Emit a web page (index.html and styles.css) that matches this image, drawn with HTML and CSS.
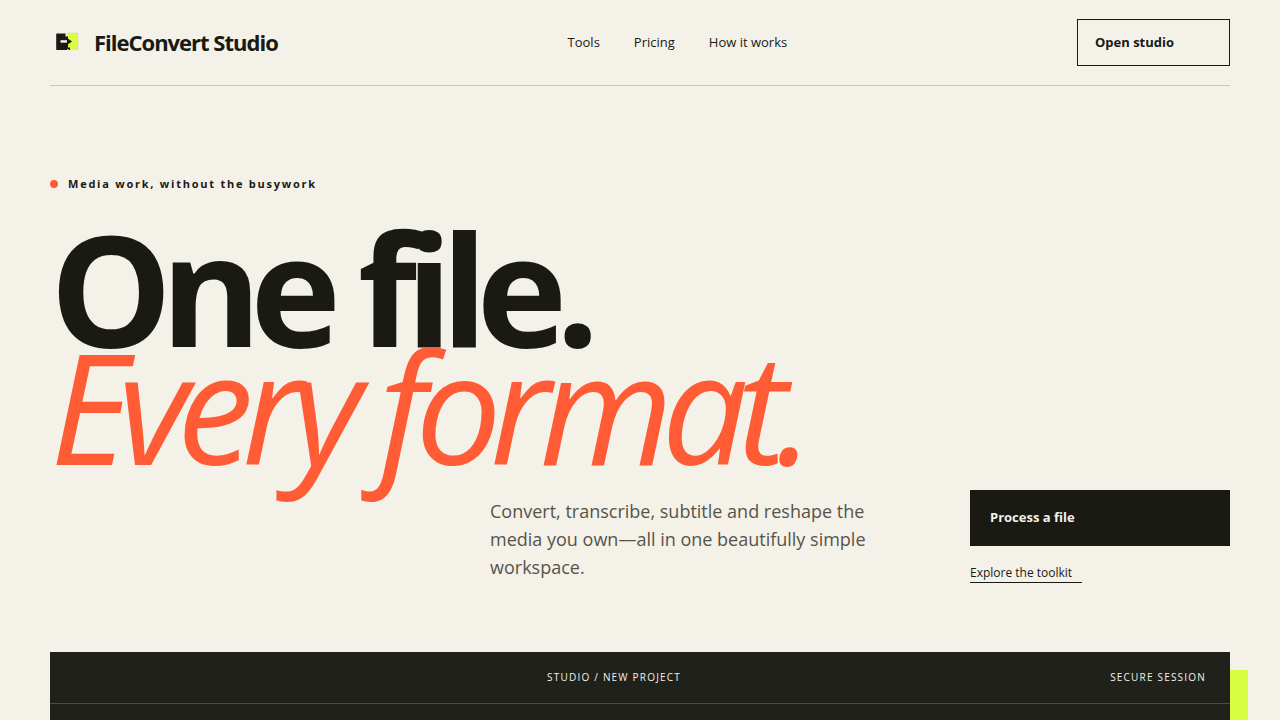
FILE: index.html
```
<!DOCTYPE html>
<html lang="en">
<head>
  <meta charset="UTF-8" />
  <meta name="viewport" content="width=device-width, initial-scale=1.0"/>
  <title>FileConvert Studio</title>
  <link rel="stylesheet" href="styles.css">
</head>
<body>
  <header class="site-header">
    <a class="brand" href="#">
      <svg class="brand-mark" viewBox="0 0 34 34" aria-hidden="true">
        <path d="M17 8h11v17H17z" fill="#d7ff3f"/>
        <path d="M17 8.300h10.700V25" fill="none" stroke="#ffc4a8" stroke-width="0.700"/>
        <path d="M7 8.500h8.500v3H18V24h-1v1H7q-.8 0-.8-.8V9.300q0-.8.8-.8z" fill="#191a14"/>
        <path d="M10.500 15.200H17v2.500h-6.500z" fill="#f4f1e8"/>
        <path d="M17 13l5 3.500-5 3.500z" fill="#191a14"/>
        <path d="M17 22.500h3V25h-1.500v-1H17z" fill="#191a14"/>
      </svg>
      <span>FileConvert Studio</span>
    </a>
    <nav class="site-nav">
      <a href="#tools">Tools</a>
      <a href="#pricing">Pricing</a>
      <a href="#how">How it works</a>
    </nav>
    <button class="open-btn" type="button">Open studio</button>
  </header>

  <main>
    <section class="hero">
      <p class="eyebrow"><span class="dot"></span>Media work, without the busywork</p>
      <h1>One file.<br><em>Every format.</em></h1>
      <div class="hero-bottom">
        <p class="hero-copy">Convert, transcribe, subtitle and reshape the media you own—all in one beautifully simple workspace.</p>
        <div class="hero-actions">
          <button class="process-btn" type="button">Process a file</button>
          <a class="toolkit-link" href="#tools">Explore the toolkit</a>
        </div>
      </div>
    </section>

    <section class="studio">
      <div class="studio-bar">
        <span class="studio-side"></span>
        <span>STUDIO / NEW PROJECT</span>
        <span>SECURE SESSION</span>
      </div>
      <div class="studio-body"></div>
    </section>
  </main>
</body>
</html>
```
FILE: styles.css
```
* {
  box-sizing: border-box;
}
body {
  margin: 0;
  padding: 0 50px;
  background-color: #f4f1e8;
  color: #191a14;
  font-family: "Open Sans", sans-serif;
  overflow-x: hidden;
}
a {
  color: inherit;
  text-decoration: none;
}
button {
  font: inherit;
  font-size: 13px;
  font-weight: 700;
  text-align: left;
  cursor: pointer;
}
.site-header {
  display: flex;
  align-items: center;
  justify-content: space-between;
  height: 86px;
  border-bottom: 1px solid #cbc8bb;
}
.brand {
  display: flex;
  align-items: center;
  gap: 10px;
  padding-bottom: 1px;
  font-size: 22px;
  font-weight: 700;
  letter-spacing: -1px;
}
.brand-mark {
  width: 34px;
  height: 34px;
}
.site-nav {
  display: flex;
  gap: 34px;
  padding-bottom: 1px;
  font-size: 13px;
}
.open-btn {
  width: 153px;
  height: 47px;
  padding: 0 17px 1px;
  border: 1px solid #191a14;
  background: none;
  color: #191a14;
}
.hero {
  padding: 90px 0 69px;
}
.eyebrow {
  display: flex;
  align-items: center;
  gap: 10px;
  margin: 0 0 37px;
  font-size: 11px;
  font-weight: 700;
  line-height: 16px;
  letter-spacing: 0.16em;
}
.dot {
  width: 8px;
  height: 8px;
  border-radius: 50%;
  background-color: #ff5c35;
}
h1 {
  margin: 0;
  font-size: 12vw;
  font-weight: 700;
  line-height: 118px;
  letter-spacing: -0.075em;
}
h1 em {
  color: #ff5c35;
  font-weight: 400;
}
.hero-bottom {
  display: grid;
  grid-template-columns: 1fr 420px 260px;
  align-items: end;
  gap: 60px;
  margin-top: 25px;
}
.hero-copy {
  grid-column: 2;
  max-width: 400px;
  margin: 0 0 2px;
  color: #55544b;
  font-size: 18px;
  line-height: 28px;
}
.hero-actions {
  display: flex;
  flex-direction: column;
  align-items: flex-start;
  gap: 18px;
}
.process-btn {
  width: 100%;
  height: 56px;
  padding: 0 20px 2px;
  border: none;
  background-color: #191a14;
  color: #f4f1e8;
}
.toolkit-link {
  padding-right: 10px;
  border-bottom: 1px solid #191a14;
  font-size: 12px;
  line-height: 18px;
}
.studio {
  background-color: #20211b;
  color: #f4f1e8;
  box-shadow: 18px 18px 0 #d7ff3f;
}
.studio-bar {
  display: flex;
  align-items: center;
  justify-content: space-between;
  height: 52px;
  padding: 0 24px 1px;
  border-bottom: 1px solid #4b4c45;
  font-size: 10px;
  letter-spacing: 0.12em;
}
.studio-side {
  width: 44px;
}
.studio-body {
  min-height: 400px;
}
```
